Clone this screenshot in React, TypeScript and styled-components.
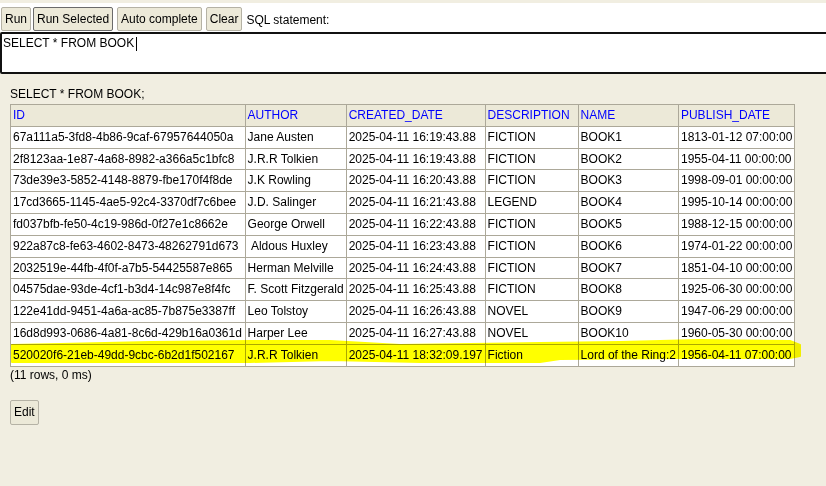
import React from "react";
import styled, { createGlobalStyle } from "styled-components";

const Global = createGlobalStyle`
  html, body { margin: 0; padding: 0; background: #f1eee1; }
  body { font: 12px/1.4 "Liberation Sans", Arial, sans-serif; color: #000; overflow: hidden; }
  * { box-sizing: border-box; }
`;

const Page = styled.div`
  width: 826px;
  height: 486px;
  padding-top: 3px;
  background: #f1eee1;
  overflow: hidden;
`;

const Toolbar = styled.div`
  display: flex;
  align-items: flex-end;
  gap: 4px;
  height: 29px;
  padding: 0 0 1px 1px;
  background: #fff;
`;

const Button = styled.button<{ $focused?: boolean }>`
  height: 24px;
  padding: 0 3px;
  margin: 0;
  font: 12px "Liberation Sans", Arial, sans-serif;
  color: #000;
  background: #ece9d8;
  border: 1px solid ${(p) => (p.$focused ? "#6b6b6b" : "#b5b2a5")};
  border-radius: 2px;
  cursor: default;
`;

const RunButton = styled(Button)`
  margin-right: -2px;
`;

const Label = styled.span`
  align-self: center;
  padding-top: 6px;
`;

const Editor = styled.div`
  height: 42px;
  width: 840px;
  border: 2px solid #111;
  border-radius: 2px;
  background: #fff;
  padding: 1px 1px 0 1px;
  display: flex;
  align-items: flex-start;
`;

const Caret = styled.span`
  display: inline-block;
  width: 1px;
  height: 14px;
  background: #000;
  margin-left: 2px;
  margin-top: 2px;
`;

const Result = styled.div`
  padding: 12px 0 0 10px;
`;

const Statement = styled.div`
  height: 18px;
`;

const TableWrap = styled.div`
  position: relative;
  width: fit-content;
`;

const Table = styled.table`
  border-collapse: collapse;
  border: 1px solid #aca899;
`;

const Th = styled.th<{ $w?: number }>`
  background: #ece9d8;
  border: 1px solid #aca899;
  padding: 2px;
  text-align: left;
  font-weight: normal;
  color: #0000ff;
  white-space: nowrap;
  ${(p) => (p.$w ? `width: ${p.$w}px;` : "")}
`;

const Td = styled.td`
  background: #fff;
  border: 1px solid #aca899;
  padding: 2px;
  white-space: nowrap;
`;

const Marker = styled.svg`
  position: absolute;
  left: 0;
  top: 0;
  overflow: visible;
  pointer-events: none;
  mix-blend-mode: multiply;
`;

const Footer = styled.div`
  height: 17px;
`;

const EditButton = styled(Button)`
  margin-top: 16px;
  height: 25px;
`;

const columns: { name: string; w?: number }[] = [
  { name: "ID", w: 234.6 },
  { name: "AUTHOR" },
  { name: "CREATED_DATE" },
  { name: "DESCRIPTION", w: 93 },
  { name: "NAME" },
  { name: "PUBLISH_DATE" },
];

const rows: string[][] = [
  ["67a111a5-3fd8-4b86-9caf-67957644050a", "Jane Austen", "2025-04-11 16:19:43.88", "FICTION", "BOOK1", "1813-01-12 07:00:00"],
  ["2f8123aa-1e87-4a68-8982-a366a5c1bfc8", "J.R.R Tolkien", "2025-04-11 16:19:43.88", "FICTION", "BOOK2", "1955-04-11 00:00:00"],
  ["73de39e3-5852-4148-8879-fbe170f4f8de", "J.K Rowling", "2025-04-11 16:20:43.88", "FICTION", "BOOK3", "1998-09-01 00:00:00"],
  ["17cd3665-1145-4ae5-92c4-3370df7c6bee", "J.D. Salinger", "2025-04-11 16:21:43.88", "LEGEND", "BOOK4", "1995-10-14 00:00:00"],
  ["fd037bfb-fe50-4c19-986d-0f27e1c8662e", "George Orwell", "2025-04-11 16:22:43.88", "FICTION", "BOOK5", "1988-12-15 00:00:00"],
  ["922a87c8-fe63-4602-8473-48262791d673", "\u00a0Aldous Huxley", "2025-04-11 16:23:43.88", "FICTION", "BOOK6", "1974-01-22 00:00:00"],
  ["2032519e-44fb-4f0f-a7b5-54425587e865", "Herman Melville", "2025-04-11 16:24:43.88", "FICTION", "BOOK7", "1851-04-10 00:00:00"],
  ["04575dae-93de-4cf1-b3d4-14c987e8f4fc", "F. Scott Fitzgerald", "2025-04-11 16:25:43.88", "FICTION", "BOOK8", "1925-06-30 00:00:00"],
  ["122e41dd-9451-4a6a-ac85-7b875e3387ff", "Leo Tolstoy", "2025-04-11 16:26:43.88", "NOVEL", "BOOK9", "1947-06-29 00:00:00"],
  ["16d8d993-0686-4a81-8c6d-429b16a0361d", "Harper Lee", "2025-04-11 16:27:43.88", "NOVEL", "BOOK10", "1960-05-30 00:00:00"],
  ["520020f6-21eb-49dd-9cbc-6b2d1f502167", "J.R.R Tolkien", "2025-04-11 18:32:09.197", "Fiction", "Lord of the Ring:2", "1956-04-11 07:00:00"],
];

const markerPath =
  "M2,241 L50,240 L140,238 L240,237 L320,237 L390,241 L460,240 L530,239 L610,238 L690,236 L780,237 L790,241 L790,252 L780,254 L670,254 L550,255 L530,258 L410,258 L320,256 L240,258 L140,258 L50,258 L2,258 Z";

export default function App() {
  return (
    <Page>
      <Global />
      <Toolbar>
        <RunButton>Run</RunButton>
        <Button $focused>Run Selected</Button>
        <Button>Auto complete</Button>
        <Button>Clear</Button>
        <Label>SQL statement:</Label>
      </Toolbar>
      <Editor>
        <span>SELECT * FROM BOOK</span>
        <Caret />
      </Editor>
      <Result>
        <Statement>SELECT * FROM BOOK;</Statement>
        <TableWrap>
          <Table>
            <thead>
              <tr>
                {columns.map((c) => (
                  <Th key={c.name} $w={c.w}>
                    {c.name}
                  </Th>
                ))}
              </tr>
            </thead>
            <tbody>
              {rows.map((r) => (
                <tr key={r[0]}>
                  {r.map((v, i) => (
                    <Td key={i}>{v}</Td>
                  ))}
                </tr>
              ))}
            </tbody>
          </Table>
          <Marker width="800" height="270">
            <path d={markerPath} fill="#ffff00" stroke="#ffff00" strokeWidth="2" strokeLinejoin="round" />
          </Marker>
        </TableWrap>
        <Footer>(11 rows, 0 ms)</Footer>
        <EditButton>Edit</EditButton>
      </Result>
    </Page>
  );
}
